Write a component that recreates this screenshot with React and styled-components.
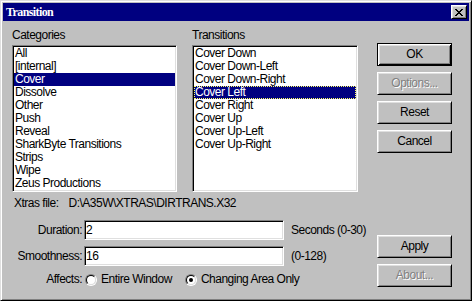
import React from "react";
import styled, { createGlobalStyle } from "styled-components";

const GlobalStyle = createGlobalStyle`
  html, body {
    margin: 0;
    padding: 0;
    background: #c0c0c0;
  }
`;

const Window = styled.div`
  box-sizing: border-box;
  width: 472px;
  height: 301px;
  background: #c0c0c0;
  border: 1px solid;
  border-color: #dfdfdf #000 #000 #dfdfdf;
  box-shadow: inset 1px 1px #fff, inset -1px -1px #808080;
  padding: 2px;
  display: flex;
  flex-direction: column;
  font-family: "Liberation Sans", Arial, sans-serif;
  font-size: 12px;
  letter-spacing: -0.5px;
  color: #000;
`;

const TitleBar = styled.div`
  flex: none;
  height: 18px;
  background: #000080;
  display: flex;
  align-items: center;
  justify-content: space-between;
  padding: 0 2px 0 3px;
`;

const Title = styled.span`
  font-family: "Liberation Serif", "Times New Roman", serif;
  font-weight: bold;
  font-size: 12px;
  letter-spacing: -0.6px;
  color: #fff;
`;

const CloseButton = styled.div`
  box-sizing: border-box;
  width: 16px;
  height: 14px;
  background: #c0c0c0;
  border: 1px solid;
  border-color: #fff #000 #000 #fff;
  box-shadow: inset 1px 1px #dfdfdf, inset -1px -1px #808080;
  display: flex;
  align-items: center;
  justify-content: center;
`;

const Body = styled.div`
  flex: 1;
  display: flex;
  padding: 8px 0 0 9px;
`;

const Main = styled.div`
  width: 346px;
  display: flex;
  flex-direction: column;
`;

const ListsRow = styled.div`
  display: flex;
  gap: 15px;
`;

const ListGroup = styled.div`
  width: ${(p) => p.$width}px;
  display: flex;
  flex-direction: column;
`;

const Label = styled.div`
  line-height: 13px;
  height: 13px;
  margin-bottom: 3px;
  white-space: nowrap;
`;

const ListBox = styled.ul`
  box-sizing: border-box;
  height: 147px;
  margin: 0;
  padding: 1px;
  list-style: none;
  background: #fff;
  border: 1px solid;
  border-color: #808080 #fff #fff #808080;
  box-shadow: inset 1px 1px #000, inset -1px -1px #dfdfdf;
  overflow: hidden;
`;

const Item = styled.li`
  box-sizing: border-box;
  height: 13px;
  line-height: 13px;
  padding-left: 1px;
  white-space: nowrap;
  background: ${(p) => (p.$selected ? "#000080" : "transparent")};
  color: ${(p) => (p.$selected ? "#fff" : "#000")};
  outline: ${(p) => (p.$focused ? "1px dotted #ffff60" : "none")};
  outline-offset: -1px;
`;

const XtrasLine = styled.div`
  margin-top: 5px;
  padding-left: 2px;
  line-height: 13px;
  white-space: nowrap;
`;

const Path = styled.span`
  margin-left: 10px;
`;

const Form = styled.div`
  margin-top: 10px;
  display: grid;
  grid-template-columns: 72px 200px auto;
  grid-template-rows: 20px 20px 13px;
  row-gap: 6px;
`;

const FieldLabel = styled.div`
  justify-self: end;
  align-self: center;
  padding-right: 2px;
  line-height: 13px;
  white-space: nowrap;
  margin-top: ${(p) => p.$shift || 0}px;
`;

const TextField = styled.input`
  box-sizing: border-box;
  width: 200px;
  height: 20px;
  margin: 0;
  padding: 0 0 0 1px;
  background: #fff;
  border: 1px solid;
  border-color: #808080 #fff #fff #808080;
  box-shadow: inset 1px 1px #000, inset -1px -1px #dfdfdf;
  font: inherit;
  letter-spacing: inherit;
  line-height: 16px;
  color: #000;
  outline: none;
`;

const Hint = styled.div`
  align-self: center;
  padding-left: 7px;
  line-height: 13px;
  white-space: nowrap;
`;

const RadioRow = styled.div`
  grid-column: 2 / 4;
  display: flex;
  align-items: center;
  gap: 13px;
  margin-top: 2px;
  padding-left: 1px;
`;

const RadioOption = styled.label`
  display: flex;
  align-items: center;
  gap: 4px;
  line-height: 13px;
  white-space: nowrap;
`;

const RadioOuter = styled.span`
  box-sizing: border-box;
  width: 12px;
  height: 12px;
  border-radius: 50%;
  border: 1px solid;
  border-color: #808080 #fff #fff #808080;
  display: flex;
`;

const RadioInner = styled.span`
  box-sizing: border-box;
  width: 10px;
  height: 10px;
  border-radius: 50%;
  border: 1px solid;
  border-color: #000 #dfdfdf #dfdfdf #000;
  background: #fff;
  display: flex;
  align-items: center;
  justify-content: center;

  &::after {
    content: "";
    width: 4px;
    height: 4px;
    border-radius: 50%;
    background: ${(p) => (p.$checked ? "#000" : "transparent")};
  }
`;

const ButtonColumn = styled.div`
  margin-left: 19px;
  padding-top: 14px;
  width: 75px;
  display: flex;
  flex-direction: column;
`;

const ButtonStack = styled.div`
  display: flex;
  flex-direction: column;
  gap: 6px;
  margin-top: ${(p) => p.$offset || 0}px;
`;

const Button = styled.div`
  box-sizing: border-box;
  height: 23px;
  background: #c0c0c0;
  display: flex;
  align-items: center;
  justify-content: center;
  line-height: 13px;
  border: 1px solid;
  border-color: ${(p) => (p.$default ? "#000" : "#fff #000 #000 #fff")};
  box-shadow: ${(p) =>
    p.$default
      ? "inset 1px 1px #fff, inset -1px -1px #000, inset 2px 2px #dfdfdf, inset -2px -2px #808080"
      : "inset 1px 1px #dfdfdf, inset -1px -1px #808080"};
  color: ${(p) => (p.$disabled ? "#808080" : "#000")};
  text-shadow: ${(p) => (p.$disabled ? "1px 1px #fff" : "none")};
`;

const categories = [
  "All",
  "[internal]",
  "Cover",
  "Dissolve",
  "Other",
  "Push",
  "Reveal",
  "SharkByte Transitions",
  "Strips",
  "Wipe",
  "Zeus Productions",
];

const transitions = [
  "Cover Down",
  "Cover Down-Left",
  "Cover Down-Right",
  "Cover Left",
  "Cover Right",
  "Cover Up",
  "Cover Up-Left",
  "Cover Up-Right",
];

const closeRows = [
  [0, 6],
  [1, 5],
  [2, 4],
  [3],
  [2, 4],
  [1, 5],
  [0, 6],
];

const CloseGlyph = () => (
  <svg width="8" height="7" viewBox="0 0 8 7" shapeRendering="crispEdges">
    {closeRows.map((xs, y) =>
      xs.map((x) => (
        <rect key={`${x}-${y}`} x={x} y={y} width={x === 2 && y !== 3 ? 4 : 2} height="1" fill="#000" />
      ))
    )}
  </svg>
);

const Radio = ({ checked, children }) => (
  <RadioOption>
    <RadioOuter>
      <RadioInner $checked={checked} />
    </RadioOuter>
    {children}
  </RadioOption>
);

const App = () => {
  return (
    <>
      <GlobalStyle />
      <Window>
        <TitleBar>
          <Title>Transition</Title>
          <CloseButton>
            <CloseGlyph />
          </CloseButton>
        </TitleBar>
        <Body>
          <Main>
            <ListsRow>
              <ListGroup $width={165}>
                <Label>Categories</Label>
                <ListBox>
                  {categories.map((c) => (
                    <Item key={c} $selected={c === "Cover"}>
                      {c}
                    </Item>
                  ))}
                </ListBox>
              </ListGroup>
              <ListGroup $width={166}>
                <Label>Transitions</Label>
                <ListBox>
                  {transitions.map((t) => (
                    <Item key={t} $selected={t === "Cover Left"} $focused={t === "Cover Left"}>
                      {t}
                    </Item>
                  ))}
                </ListBox>
              </ListGroup>
            </ListsRow>
            <XtrasLine>
              Xtras file:<Path>{"D:\\A35W\\XTRAS\\DIRTRANS.X32"}</Path>
            </XtrasLine>
            <Form>
              <FieldLabel>Duration:</FieldLabel>
              <TextField defaultValue="2" />
              <Hint>Seconds (0-30)</Hint>
              <FieldLabel>Smoothness:</FieldLabel>
              <TextField defaultValue="16" />
              <Hint>(0-128)</Hint>
              <FieldLabel $shift={2}>Affects:</FieldLabel>
              <RadioRow>
                <Radio>Entire Window</Radio>
                <Radio checked>Changing Area Only</Radio>
              </RadioRow>
            </Form>
          </Main>
          <ButtonColumn>
            <ButtonStack>
              <Button $default>OK</Button>
              <Button $disabled>Options...</Button>
              <Button>Reset</Button>
              <Button>Cancel</Button>
            </ButtonStack>
            <ButtonStack $offset={82}>
              <Button>Apply</Button>
              <Button $disabled>About...</Button>
            </ButtonStack>
          </ButtonColumn>
        </Body>
      </Window>
    </>
  );
};

export default App;
